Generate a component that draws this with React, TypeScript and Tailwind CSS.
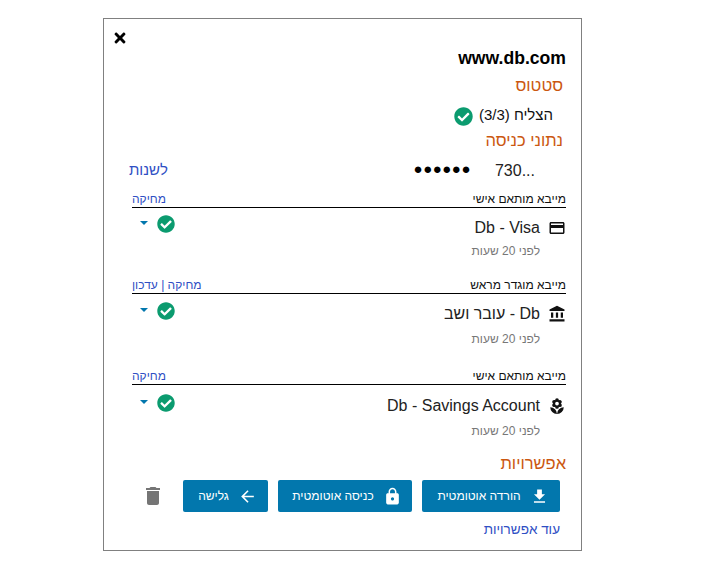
import { FaCheckCircle, FaTimes } from "react-icons/fa";
import {
  MdAccountBalance,
  MdArrowBack,
  MdCreditCard,
  MdDelete,
  MdFileDownload,
  MdLocalFlorist,
  MdLock,
} from "react-icons/md";
import type { ReactNode } from "react";

const Heading = ({ children, className }: { children: ReactNode; className: string }) => (
  <h2 className={`text-[16.5px] leading-[20px] text-[#cb5710] ${className}`}>{children}</h2>
);

const Check = ({ size }: { size: number }) => <FaCheckCircle size={size} className="text-[#0b9b6f]" />;

const Account = ({
  kind,
  actions,
  icon,
  name,
  className,
  nameTop,
  dateGap,
  checkTop,
}: {
  kind: string;
  actions: ReactNode;
  icon: ReactNode;
  name: string;
  className: string;
  nameTop: string;
  dateGap: string;
  checkTop: string;
}) => (
  <div className={className}>
    <div className="flex justify-between items-end h-[17px] border-b border-black box-content text-[12px] leading-[15px]">
      <span className="text-[#111]">{kind}</span>
      <span className="text-[#2f4fc4]">{actions}</span>
    </div>
    <div className="flex justify-between items-start">
      <div className={nameTop}>
        <div className="flex items-center gap-[8px] h-[22px]">
          <span className="w-[18px] flex justify-center text-[#111]">{icon}</span>
          <span className="text-[16px] leading-[20px] text-[#222]">{name}</span>
        </div>
        <div className={`pr-[26px] text-[12px] leading-[18px] text-[#777] ${dateGap}`}>לפני 20 שעות</div>
      </div>
      <div className={`flex items-center gap-[9px] pl-[8px] ${checkTop}`}>
        <Check size={18} />
        <span className="w-0 h-0 mb-[2px] border-x-[4px] border-t-[4px] border-x-transparent border-t-[#0277ad]" />
      </div>
    </div>
  </div>
);

const ActionButton = ({ icon, label, width }: { icon: ReactNode; label: string; width: string }) => (
  <button className={`flex items-center justify-center gap-[9px] h-[32px] pl-[4px] rounded-[2px] bg-[#0277ad] text-white text-[12px] ${width}`}>
    {icon}
    <span>{label}</span>
  </button>
);

const App = () => {
  return (
    <div className="pt-[18px] pl-[103px] font-['Liberation_Sans',Arial,sans-serif]">
      <div dir="rtl" className="w-[479px] h-[533px] border border-[#808080] bg-white pr-[15px] pl-[28px]">
        <div dir="ltr" className="pt-[11px] -ml-[20px] h-[29px]">
          <FaTimes size={16} className="text-black" />
        </div>
        <div className="text-[17.6px] leading-[20px] font-bold text-black" dir="ltr">
          <div className="text-right">www.db.com</div>
        </div>
        <Heading className="mt-[7px] pr-[3px]">סטטוס</Heading>
        <div className="flex items-center gap-[6px] mt-[10px] pr-[13px] h-[20px] text-[15px] text-[#111]">
          <span>הצליח (3/3)</span>
          <span className="pt-[2px]">
            <Check size={19} />
          </span>
        </div>
        <Heading className="mt-[5px] pr-[3px]">נתוני כניסה</Heading>
        <div className="flex items-center justify-between mt-[11px] h-[20px] pr-[31px] -ml-[3px]">
          <div className="flex items-center gap-[24px]">
            <span dir="ltr" className="text-[16px] text-[#222]">730...</span>
            <span className="text-[15px] tracking-[0.5px] text-black -translate-y-[2px]">●●●●●●</span>
          </div>
          <a className="text-[15px] -mt-[2px] text-[#2f4fc4]">לשנות</a>
        </div>
        <Account
          className="mt-[9px]"
          kind="מייבא מותאם אישי"
          actions="מחיקה"
          icon={<MdCreditCard size={18} />}
          name="Db - Visa"
          nameTop="pt-[9px]"
          dateGap="mt-[3px]"
          checkTop="pt-[7px]"
        />
        <Account
          className="mt-[16px]"
          kind="מייבא מוגדר מראש"
          actions="מחיקה | עדכון"
          icon={<MdAccountBalance size={18} />}
          name="Db - עובר ושב"
          nameTop="pt-[9px]"
          dateGap="mt-[5px]"
          checkTop="pt-[8px]"
        />
        <Account
          className="mt-[19px]"
          kind="מייבא מותאם אישי"
          actions="מחיקה"
          icon={<MdLocalFlorist size={19} />}
          name="Db - Savings Account"
          nameTop="pt-[10px]"
          dateGap="mt-[5px]"
          checkTop="pt-[9px]"
        />
        <Heading className="mt-[13px]">אפשרויות</Heading>
        <div className="flex items-center gap-[10px] mt-[7px] pr-[6px]">
          <ActionButton icon={<MdFileDownload size={19} />} label="הורדה אוטומטית" width="w-[138px]" />
          <ActionButton icon={<MdLock size={19} />} label="כניסה אוטומטית" width="w-[134px]" />
          <ActionButton icon={<MdArrowBack size={19} />} label="גלישה" width="w-[85px]" />
          <MdDelete size={24} className="text-[#757575] mr-[8px]" />
        </div>
        <a className="block mt-[9px] pr-[6px] text-[13.5px] leading-[18px] text-[#2f4fc4]">עוד אפשרויות</a>
      </div>
    </div>
  );
};

export default App;
